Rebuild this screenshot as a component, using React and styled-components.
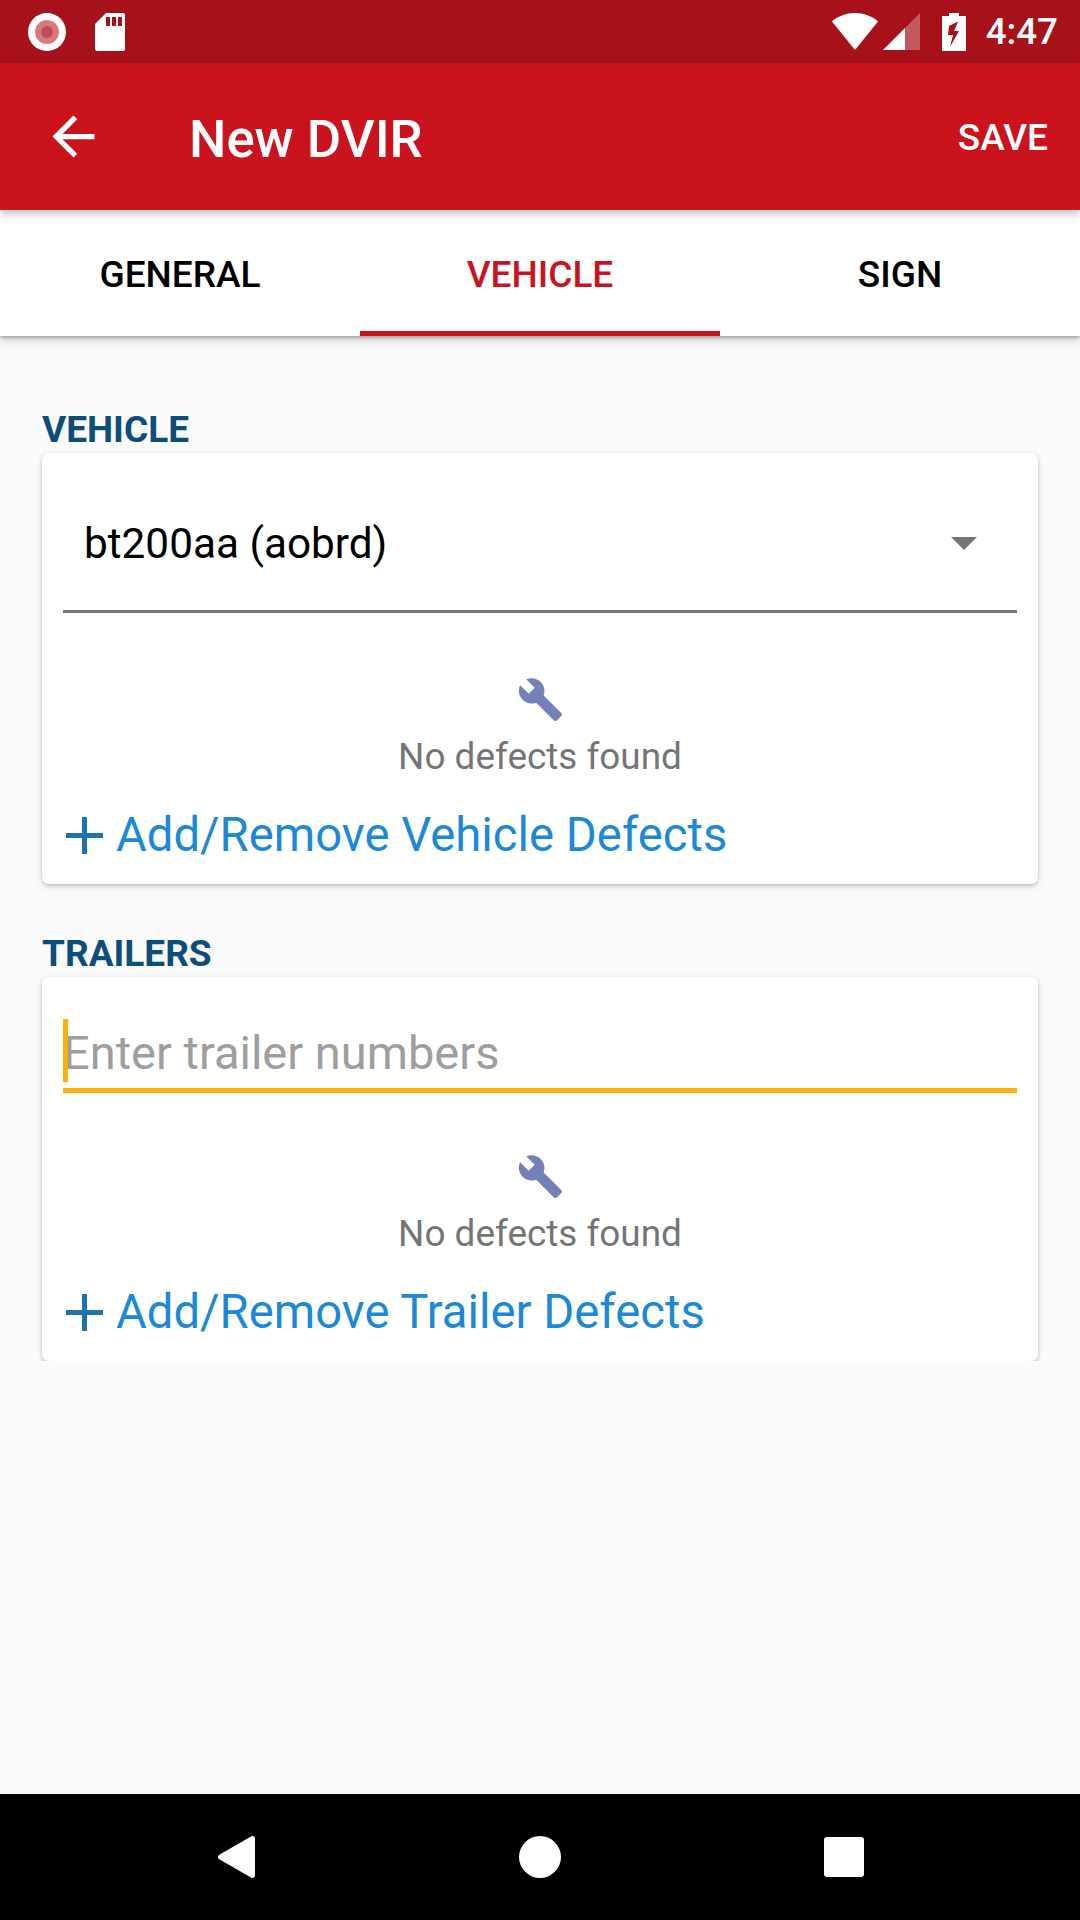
import React from "react";
import styled, { createGlobalStyle } from "styled-components";

const GlobalStyle = createGlobalStyle`
  html, body {
    margin: 0;
    padding: 0;
    background: #fafafa;
  }
  * {
    box-sizing: border-box;
  }
`;

const Screen = styled.div`
  width: 1080px;
  height: 1920px;
  display: flex;
  flex-direction: column;
  overflow: hidden;
  font-family: Roboto, "Liberation Sans", sans-serif;
  background: #fafafa;
`;

const StatusBar = styled.div`
  height: 63px;
  flex-shrink: 0;
  background: #a6111a;
  display: flex;
  align-items: center;
  justify-content: space-between;
  padding: 0 22px 0 28px;
`;

const StatusGroup = styled.div`
  display: flex;
  align-items: center;
  gap: ${(p) => p.$gap}px;
`;

const BatterySlot = styled.div`
  margin-left: 17px;
  display: flex;
`;

const Clock = styled.span`
  color: #fff;
  font-size: 36.75px;
  font-weight: 500;
  line-height: 63px;
  margin-left: 15px;
`;

const AppBar = styled.div`
  height: 147px;
  flex-shrink: 0;
  background: #cb131e;
  display: flex;
  align-items: center;
  padding: 0 32px 0 42px;
  position: relative;
  z-index: 2;
  box-shadow: 0 4px 8px rgba(0, 0, 0, 0.24);
`;

const Title = styled.div`
  flex: 1;
  margin-left: 84px;
  padding-top: 4px;
  color: #fff;
  font-size: 52.7px;
  font-weight: 500;
`;

const SaveButton = styled.div`
  color: #fff;
  font-size: 37px;
  font-weight: 500;
  padding-top: 2px;
`;

const Tabs = styled.div`
  height: 126px;
  flex-shrink: 0;
  background: #fff;
  display: flex;
  position: relative;
  z-index: 1;
  box-shadow: 0 2px 2px rgba(0, 0, 0, 0.2), 0 5px 8px rgba(0, 0, 0, 0.16);
`;

const Tab = styled.div`
  flex: 1;
  display: flex;
  align-items: center;
  justify-content: center;
  font-size: 37px;
  font-weight: 500;
  color: ${(p) => (p.$active ? "#cb131e" : "#000")};
  border-bottom: 5px solid ${(p) => (p.$active ? "#cb131e" : "transparent")};
  padding-top: 8px;
`;

const Content = styled.div`
  flex: 1;
  display: flex;
  flex-direction: column;
`;

const Scroller = styled.div`
  height: 1025px;
  overflow: hidden;
  padding: 72px 42px 0;
  display: flex;
  flex-direction: column;
`;

const SectionLabel = styled.div`
  color: #0c4d7a;
  font-size: 37px;
  font-weight: 700;
  line-height: 43px;
  margin-top: ${(p) => p.$top || 0}px;
  margin-bottom: 2px;
`;

const Card = styled.div`
  background: #fff;
  border-radius: 7px;
  padding: 0 21px;
  box-shadow: 0 2px 5px rgba(0, 0, 0, 0.26);
  height: ${(p) => p.$height}px;
  flex-shrink: 0;
`;

const Select = styled.div`
  height: 160px;
  display: flex;
  align-items: center;
  justify-content: space-between;
  padding: 24px 40px 0 21px;
  border-bottom: 3px solid #757575;
  font-size: 42.3px;
  color: #000;
`;

const Arrow = styled.div`
  width: 0;
  height: 0;
  border-left: 13px solid transparent;
  border-right: 13px solid transparent;
  border-top: 13px solid #757575;
`;

const InputWrap = styled.div`
  position: relative;
  height: 116px;
  padding-top: 48px;
  border-bottom: 5px solid #fbb00a;
  font-size: 47px;
  line-height: 56px;
  color: #9e9e9e;
`;

const Caret = styled.div`
  position: absolute;
  left: 0;
  top: 42px;
  width: 4.5px;
  height: 63px;
  background: #fbb00a;
`;

const Defects = styled.div`
  display: flex;
  flex-direction: column;
  align-items: center;
  padding-top: ${(p) => p.$top}px;
`;

const DefectsText = styled.div`
  color: #757575;
  font-size: 36.9px;
  line-height: 43px;
  margin-top: 12px;
`;

const AddRow = styled.div`
  align-self: flex-start;
  display: flex;
  align-items: center;
  gap: 13px;
  margin-top: 29px;
  padding-left: 3px;
  color: #1c89d8;
  font-size: 47.25px;
  line-height: 56px;
`;

const NavBar = styled.div`
  height: 126px;
  flex-shrink: 0;
  margin-top: auto;
  background: #000;
  display: grid;
  grid-template-columns: repeat(3, 304px);
  justify-content: center;
  justify-items: center;
  align-items: center;
`;

const NavCircle = styled.div`
  width: 42px;
  height: 42px;
  border-radius: 50%;
  background: #fff;
`;

const NavSquare = styled.div`
  width: 40px;
  height: 40px;
  border-radius: 3px;
  background: #fff;
`;

const WRENCH =
  "M22.7 19l-9.1-9.1c.9-2.3.4-5-1.5-6.9-2-2-5-2.4-7.4-1.3L9 6 6 9 1.6 4.7C.4 7.1.9 10.1 2.9 12.1c1.9 1.9 4.6 2.4 6.9 1.5l9.1 9.1c.4.4 1 .4 1.4 0l2.3-2.3c.5-.4.5-1.1.1-1.4z";

const Wrench = () => (
  <svg width="47" height="47" viewBox="0 0 24 24">
    <path d={WRENCH} fill="#7481b9" />
  </svg>
);

const Plus = () => (
  <svg width="37" height="37" viewBox="0 0 37 37">
    <path d="M16 0h5v16h16v5H21v16h-5V21H0v-5h16z" fill="#1f72ad" />
  </svg>
);

const BackArrow = () => (
  <svg width="63" height="63" viewBox="0 0 24 24">
    <path d="M20 11H7.83l5.59-5.59L12 4l-8 8 8 8 1.41-1.41L7.83 13H20v-2z" fill="#fff" />
  </svg>
);

const RecordIcon = () => (
  <svg width="38" height="38" viewBox="0 0 38 38">
    <circle cx="19" cy="19" r="19" fill="#fff" />
    <circle cx="19" cy="19" r="12" fill="#d67a80" />
    <circle cx="19" cy="19" r="6" fill="#c04d55" />
  </svg>
);

const SdIcon = () => (
  <svg width="30" height="38" viewBox="0 0 30 38">
    <path
      d="M11 0h17a2 2 0 0 1 2 2v34a2 2 0 0 1-2 2H2a2 2 0 0 1-2-2V11z"
      fill="#fff"
    />
    <path d="M11 4h4v9h-4zM17 4h4v9h-4zM23 4h4v9h-4z" fill="#a6111a" />
  </svg>
);

const WifiIcon = () => (
  <svg width="46" height="37" viewBox="0 0 46 37">
    <path d="M0 8.500C6 3 14 0 23 0s17 3 23 8.500L23 37z" fill="#fff" />
  </svg>
);

const SignalIcon = () => (
  <svg width="37" height="37" viewBox="0 0 37 37">
    <path d="M37 0v37H22V15z" fill="#c4585f" />
    <path d="M22 15v22H0z" fill="#fff" />
  </svg>
);

const BatteryIcon = () => (
  <svg width="24" height="38" viewBox="0 0 24 38">
    <path d="M7 0h10v3h7v35H0V3h7z" fill="#fff" />
    <path d="M15 9l-8 4-1 9h5l-3 12 9-16h-5l4-9z" fill="#a6111a" />
  </svg>
);

const NavBack = () => (
  <svg width="37" height="42" viewBox="0 0 37 42">
    <path
      d="M33 .6c1.600-1.300 4-.4 4 1.900v37c0 2.300-2.400 3.200-4 1.900L1.300 23.300c-1.700-1.100-1.700-3.500 0-4.600z"
      fill="#fff"
    />
  </svg>
);

function DefectsSection({ top, label }) {
  return (
    <Defects $top={top}>
      <Wrench />
      <DefectsText>No defects found</DefectsText>
      <AddRow>
        <Plus />
        <span>{label}</span>
      </AddRow>
    </Defects>
  );
}

export default function App() {
  return (
    <Screen>
      <GlobalStyle />
      <StatusBar>
        <StatusGroup $gap={29}>
          <RecordIcon />
          <SdIcon />
        </StatusGroup>
        <StatusGroup $gap={5}>
          <WifiIcon />
          <SignalIcon />
          <BatterySlot>
            <BatteryIcon />
          </BatterySlot>
          <Clock>4:47</Clock>
        </StatusGroup>
      </StatusBar>
      <AppBar>
        <BackArrow />
        <Title>New DVIR</Title>
        <SaveButton>SAVE</SaveButton>
      </AppBar>
      <Tabs>
        <Tab>GENERAL</Tab>
        <Tab $active>VEHICLE</Tab>
        <Tab>SIGN</Tab>
      </Tabs>
      <Content>
        <Scroller>
          <SectionLabel>VEHICLE</SectionLabel>
          <Card $height={431}>
            <Select>
              <span>bt200aa (aobrd)</span>
              <Arrow />
            </Select>
            <DefectsSection top={63} label="Add/Remove Vehicle Defects" />
          </Card>
          <SectionLabel $top={48}>TRAILERS</SectionLabel>
          <Card $height={384}>
            <InputWrap>
              <Caret />
              Enter trailer numbers
            </InputWrap>
            <DefectsSection top={60} label="Add/Remove Trailer Defects" />
          </Card>
        </Scroller>
        <NavBar>
          <NavBack />
          <NavCircle />
          <NavSquare />
        </NavBar>
      </Content>
    </Screen>
  );
}
